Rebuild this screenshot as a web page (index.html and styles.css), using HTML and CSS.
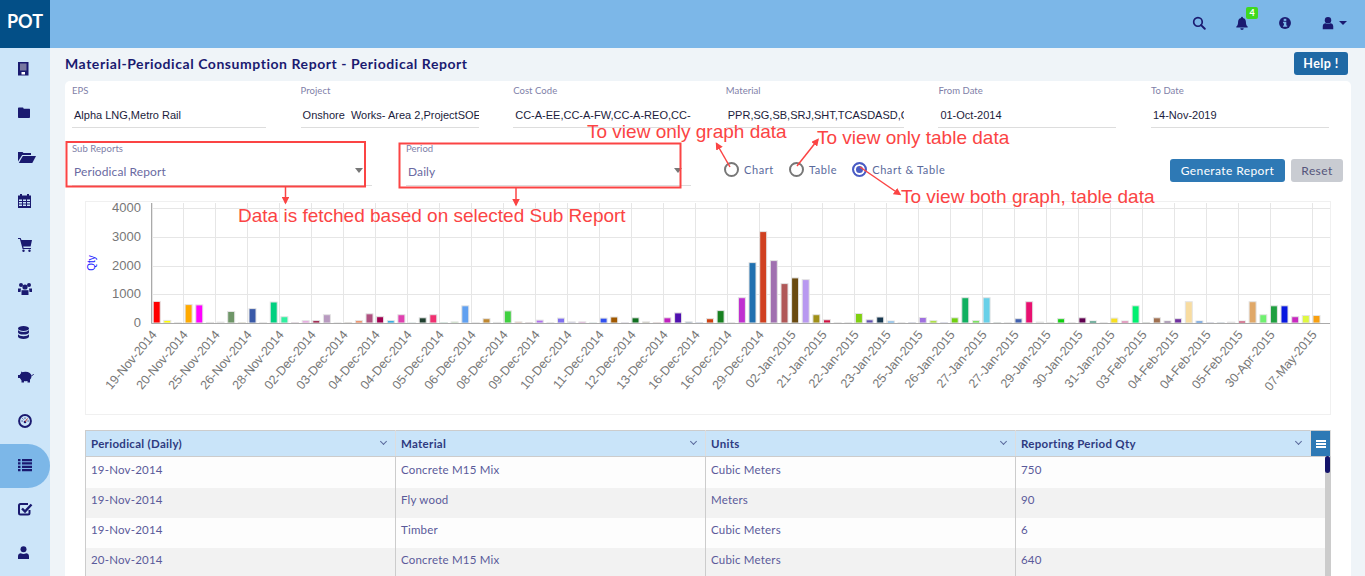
FILE: index.html
```html
<!DOCTYPE html>
<html lang="en">
<head>
    <meta charset="UTF-8">
    <meta name="viewport" content="width=device-width, initial-scale=1.0">
    <title>Material-Periodical Consumption Report</title>
    <link rel="stylesheet" href="styles.css">
</head>
<body>
    <header class="topbar">
        <div class="logo">POT</div>
        <div class="top-icons">
            <svg class="top-icon icon-search" viewBox="0 0 16 16"><circle cx="6.8" cy="6.8" r="4.9" fill="none" stroke="currentColor" stroke-width="1.9"/><path d="M10.4 10.4L14.6 14.6" stroke="currentColor" stroke-width="2.2" stroke-linecap="round"/></svg>
            <div class="bell">
                <svg class="top-icon" viewBox="0 0 16 16"><path d="M8 1a1.1 1.1 0 0 1 1.1 1.2C11.6 2.700 12.500 4.600 12.500 7c0 2.800.8 3.900 2 5v1H1.500v-1c1.200-1.100 2-2.200 2-5 0-2.400.9-4.300 3.400-4.800A1.100 1.100 0 0 1 8 1zM6 14h4a2 2 0 0 1-4 0z" fill="currentColor"/></svg>
                <span class="badge">4</span>
            </div>
            <svg class="top-icon icon-info" viewBox="0 0 16 16"><circle cx="8" cy="8" r="6.800" fill="currentColor"/><rect x="6.500" y="3.200" width="3" height="2.400" fill="#7cb7e8"/><path d="M5.800 6.700h3.700v4.200h1v1.500H5.800v-1.500h1V8.200h-1z" fill="#7cb7e8"/></svg>
            <div class="user-menu">
                <svg class="top-icon" viewBox="0 0 16 16"><circle cx="8" cy="4.800" r="3.700" fill="currentColor"/><path d="M2 15v-3c0-2.200 1.500-3.600 3.300-3.600 1.600 1 3.800 1 5.400 0 1.800 0 3.300 1.400 3.300 3.600v3z" fill="currentColor"/></svg>
                <span class="user-caret"></span>
            </div>
        </div>
    </header>

    <div class="layout">
        <nav class="sidebar">
            <a class="nav-item"><svg class="nav-icon" viewBox="0 0 18 16"><rect x="0" y="1" width="10.500" height="13.500" fill="currentColor"/><rect x="2" y="2.500" width="6.500" height="7" fill="#77779f"/><rect x="3.500" y="11" width="3.500" height="2.500" fill="#fff"/></svg></a>
            <a class="nav-item"><svg class="nav-icon" viewBox="0 0 18 16"><path d="M0 3.500C0 2.700.5 2.500 1 2.500h3.500c.6 0 1 .5 1.200 1.200h5.500c.6 0 .8.400.8 1V12c0 .6-.3 1-.8 1H1c-.6 0-1-.4-1-1z" fill="currentColor"/></svg></a>
            <a class="nav-item"><svg class="nav-icon" viewBox="0 0 18 16"><path d="M0 3h4.500l1 1H13v2H4.200L0 12.500z" fill="currentColor"/><path d="M4.800 7H18l-3.700 7H.8z" fill="currentColor"/></svg></a>
            <a class="nav-item"><svg class="nav-icon" viewBox="0 0 18 16"><path d="M0 2.500h2V1h2v1.500h5V1h2v1.500h2V15H0z" fill="currentColor"/><path d="M1 6.500h3v1.500H1zm4 0h3v1.500H5zm4 0h3v1.500H9zM1 9h3v1.500H1zm4 0h3v1.500H5zm4 0h3v1.500H9zM1 11.500h3V13H1zm4 0h3V13H5zm4 0h3V13H9z" fill="#cce5f9"/></svg></a>
            <a class="nav-item"><svg class="nav-icon" viewBox="0 0 18 16"><path d="M0 1h2.600l.9 2H14l-1.400 6.500H5.200l.4 1.500H13v1H4.600L1.900 2H0z" fill="currentColor"/><circle cx="5.500" cy="13.800" r="1.200" fill="currentColor"/><circle cx="11.500" cy="13.800" r="1.200" fill="currentColor"/></svg></a>
            <a class="nav-item"><svg class="nav-icon" viewBox="0 0 18 16"><circle cx="3" cy="4" r="2" fill="currentColor"/><circle cx="11" cy="4" r="2" fill="currentColor"/><circle cx="7" cy="6" r="2.600" fill="currentColor"/><path d="M0 7.500h3L2.500 11H0zM11 7.500h3V11h-2.500z" fill="currentColor"/><path d="M3.500 9.200h7V14h-7z" fill="currentColor"/></svg></a>
            <a class="nav-item"><svg class="nav-icon" viewBox="0 0 18 16"><ellipse cx="5.500" cy="3.500" rx="5.500" ry="2.500" fill="currentColor"/><path d="M0 5v2.200c0 1.300 2.500 2.400 5.500 2.400S11 8.500 11 7.200V5c-.8 1.300-3 2-5.500 2S.8 6.300 0 5zM0 9.300v2.200C0 12.900 2.500 14 5.500 14S11 12.900 11 11.500V9.300c-.8 1.300-3 2-5.500 2S.8 10.600 0 9.300z" fill="currentColor"/></svg></a>
            <a class="nav-item"><svg class="nav-icon" viewBox="0 0 18 16"><ellipse cx="7.500" cy="7.500" rx="6" ry="4.800" fill="currentColor"/><path d="M0 6h2.500v3H0zM3.500 10h2.500v3.500H3.500zM9.500 10H12v3.500H9.500zM3 2.500l3 1.500-2.500 2z" fill="currentColor"/><path d="M13.500 6.500c1 0 1.800-.5 2-1.500" fill="none" stroke="currentColor"/></svg></a>
            <a class="nav-item"><svg class="nav-icon" viewBox="0 0 18 16"><circle cx="7" cy="8" r="5.900" fill="#cce5f9" stroke="currentColor" stroke-width="2"/><circle cx="7" cy="9" r="1.300" fill="currentColor"/><path d="M7 9l2.500-3.500" stroke="#c0392b" stroke-width="1"/><path d="M3.500 8h1.200M9.500 8h1.200M7 4.500v1.200M4.500 5.500l.8.800" stroke="currentColor"/></svg></a>
            <a class="nav-item active"><svg class="nav-icon" viewBox="0 0 18 16"><path d="M0 2h2.500v2.300H0zM4 2h10v2.300H4zM0 5.300h2.500v2.300H0zM4 5.300h10v2.300H4zM0 8.700h2.500V11H0zM4 8.700h10V11H4zM0 12h2.500v2.300H0zM4 12h10v2.300H4z" fill="currentColor"/></svg></a>
            <a class="nav-item"><svg class="nav-icon" viewBox="0 0 18 16"><path d="M11.500 9v3c0 1-.5 1.500-1.500 1.500H2.500c-1 0-1.500-.5-1.500-1.500V4.500C1 3.500 1.500 3 2.500 3h7.500" fill="none" stroke="currentColor" stroke-width="2"/><path d="M4 7.500l3 3 6.500-7" fill="none" stroke="currentColor" stroke-width="2.400"/></svg></a>
            <a class="nav-item"><svg class="nav-icon" viewBox="0 0 18 16"><circle cx="5.500" cy="4.300" r="3" fill="currentColor"/><path d="M0 14v-2.500c0-2 1.300-3.200 2.800-3.200 1.700 1 3.700 1 5.400 0 1.500 0 2.800 1.200 2.800 3.200V14z" fill="currentColor"/></svg></a>
        </nav>

        <main class="content">
            <div class="page-head">
                <h1 class="page-title">Material-Periodical Consumption Report - Periodical Report</h1>
                <button class="btn btn-help">Help !</button>
            </div>

            <section class="card">
                <div class="filter-row">
                    <div class="field">
                        <div class="field-label">EPS</div>
                        <div class="field-value">Alpha LNG,Metro Rail</div>
                    </div>
                    <div class="field">
                        <div class="field-label">Project</div>
                        <div class="field-value">Onshore&nbsp; Works- Area 2,ProjectSOE</div>
                    </div>
                    <div class="field">
                        <div class="field-label">Cost Code</div>
                        <div class="field-value">CC-A-EE,CC-A-FW,CC-A-REO,CC-</div>
                    </div>
                    <div class="field">
                        <div class="field-label">Material</div>
                        <div class="field-value">PPR,SG,SB,SRJ,SHT,TCASDASD,CEM</div>
                    </div>
                    <div class="field">
                        <div class="field-label">From Date</div>
                        <div class="field-value">01-Oct-2014</div>
                    </div>
                    <div class="field">
                        <div class="field-label">To Date</div>
                        <div class="field-value">14-Nov-2019</div>
                    </div>
                </div>

                <div class="option-row">
                    <div class="field select-field select-sub">
                        <div class="field-label">Sub Reports</div>
                        <div class="select-value">Periodical Report</div>
                        <span class="select-caret"></span>
                    </div>
                    <div class="field select-field select-period">
                        <div class="field-label">Period</div>
                        <div class="select-value">Daily</div>
                        <span class="select-caret"></span>
                    </div>
                    <div class="radio-group">
                        <label class="radio"><span class="radio-mark"></span>Chart</label>
                        <label class="radio"><span class="radio-mark"></span>Table</label>
                        <label class="radio checked"><span class="radio-mark"></span>Chart &amp; Table</label>
                    </div>
                    <div class="actions">
                        <button class="btn btn-generate">Generate Report</button>
                        <button class="btn btn-reset">Reset</button>
                    </div>
                </div>

                <div class="chart-box">
                    <svg id="chart" class="chart" viewBox="85 201 1246 214"></svg>
                </div>

                <div class="table-wrap">
                    <table class="report-table">
                        <thead>
                            <tr>
                                <th class="col-a">Periodical (Daily)<span class="sort"></span></th>
                                <th class="col-a">Material<span class="sort"></span></th>
                                <th class="col-a">Units<span class="sort"></span></th>
                                <th class="col-b">Reporting Period Qty<span class="sort"></span></th>
                                <th class="col-menu"><span class="menu-bars"></span></th>
                            </tr>
                        </thead>
                        <tbody>
                            <tr class="first"><td>19-Nov-2014</td><td>Concrete M15 Mix</td><td>Cubic Meters</td><td colspan="2">750</td></tr>
                            <tr><td>19-Nov-2014</td><td>Fly wood</td><td>Meters</td><td colspan="2">90</td></tr>
                            <tr><td>19-Nov-2014</td><td>Timber</td><td>Cubic Meters</td><td colspan="2">6</td></tr>
                            <tr><td>20-Nov-2014</td><td>Concrete M15 Mix</td><td>Cubic Meters</td><td colspan="2">640</td></tr>
                        </tbody>
                    </table>
                    <div class="scroll-track"><div class="scroll-thumb"></div></div>
                </div>
            </section>
        </main>
    </div>

    <!-- red help notes drawn over the page -->
    <svg class="notes" viewBox="0 0 1365 576">
        <defs>
            <marker id="head" markerWidth="5" markerHeight="5" refX="4" refY="2.500" orient="auto"><path d="M0 0L5 2.500L0 5z" fill="#fb4444"/></marker>
        </defs>
        <rect class="note-box" x="66.500" y="142" width="298.500" height="44.500"/>
        <rect class="note-box" x="399.500" y="143.500" width="281" height="44"/>
        <path class="note-arrow" d="M285.500 187V203"/>
        <path class="note-arrow" d="M516 187V205"/>
        <path class="note-arrow" d="M730 167L716.500 143.500"/>
        <path class="note-arrow" d="M797 166L818 139.500"/>
        <path class="note-arrow" d="M860 167L900 194.500"/>
        <text class="note-text" x="587" y="138">To view only graph data</text>
        <text class="note-text" x="817" y="144">To view only table data</text>
        <text class="note-text" x="901" y="203">To view both graph, table data</text>
        <text class="note-text" x="238" y="222">Data is fetched based on selected Sub Report</text>
    </svg>

    <script src="chart.js"></script>
</body>
</html>
```

FILE: styles.css
```css
*{
    margin: 0;
    padding: 0;
    box-sizing: border-box;
}
html,body{
    height: 100%;
    overflow: hidden;
}
body{
    font-family: Lato, "Liberation Sans", sans-serif;
    background: #eff4f8;
    color: #1a1a70;
}

/* top bar */
.topbar{
    display: flex;
    height: 48px;
    background: #7cb7e8;
}
.logo{
    width: 50px;
    background: #034f87;
    color: #fff;
    font-size: 18px;
    font-weight: 700;
    line-height: 43px;
    text-align: center;
}
.top-icons{
    flex: 1;
    display: flex;
    justify-content: flex-end;
    align-items: center;
    gap: 29px;
    padding: 0 18px 2px 0;
    color: #1a1a70;
}
.top-icon{
    display: block;
    width: 14px;
    height: 14px;
}
.bell{
    position: relative;
}
.badge{
    position: absolute;
    top: -9px;
    left: 11px;
    width: 12px;
    height: 12px;
    border-radius: 2px;
    background: #3fd91f;
    color: #fff;
    font-size: 9px;
    font-weight: 700;
    line-height: 12px;
    text-align: center;
}
.user-menu{
    display: flex;
    align-items: center;
    gap: 4px;
}
.user-caret{
    border-left: 4px solid transparent;
    border-right: 4px solid transparent;
    border-top: 4px solid #1a1a70;
}

/* layout */
.layout{
    display: flex;
    height: 528px;
}
.sidebar{
    width: 50px;
    flex: none;
    background: #cce5f9;
}
.nav-item{
    display: flex;
    align-items: center;
    height: 44px;
    padding: 0 0 3px 18px;
    color: #1a1a70;
}
.nav-item.active{
    background: #7cb7e8;
    border-radius: 0 22px 22px 0;
}
.nav-icon{
    display: block;
    width: 18px;
    height: 16px;
}
.content{
    flex: 1;
    padding: 0 14px 0 15px;
}
.page-head{
    display: flex;
    justify-content: space-between;
    align-items: center;
    height: 33px;
    padding: 0 3px 2px 0;
}
.page-title{
    font-size: 14px;
    font-weight: 700;
    letter-spacing: .55px;
    color: #1a1a70;
}
.btn{
    border: 0;
    border-radius: 3px;
    font-family: Lato, "Liberation Sans", sans-serif;
    font-size: 12px;
    letter-spacing: .4px;
    color: #fff;
}
.btn-help{
    width: 54px;
    height: 23px;
    background: #1f69a5;
    font-size: 12.500px;
    font-weight: 700;
}

/* card */
.card{
    height: 520px;
    padding: 4px 8px 0 7px;
    background: #fff;
    border-radius: 5px 5px 0 0;
}
.filter-row{
    display: grid;
    grid-template-columns: 194px repeat(5, 178px);
    column-gap: 34.6px;
}
.field{
    height: 43px;
    border-bottom: 1px solid #ddd;
}
.field-label{
    font-size: 9.500px;
    line-height: 12px;
    letter-spacing: .05px;
    color: #7f7fa8;
}
.field-value{
    margin-top: 11px;
    padding-left: 2px;
    font-family: "Liberation Sans", sans-serif;
    font-size: 11px;
    line-height: 14px;
    color: #1c1c3c;
    white-space: nowrap;
    overflow: hidden;
}
.option-row{
    display: flex;
    margin-top: 14px;
    height: 44px;
}
.select-field{
    position: relative;
    height: 44px;
    padding-top: 1px;
}
.select-sub{
    width: 300px;
}
.select-period{
    width: 285px;
    margin-left: 34px;
}
.select-value{
    margin-top: 9px;
    padding-left: 2px;
    font-size: 12px;
    line-height: 16px;
    letter-spacing: .1px;
    color: #6a6aa2;
}
.select-caret{
    position: absolute;
    right: 9px;
    top: 26px;
    border-left: 4px solid transparent;
    border-right: 4px solid transparent;
    border-top: 5px solid #777;
}
.radio-group{
    display: flex;
    gap: 15px;
    margin-left: 33px;
    height: 44px;
    align-items: center;
    padding-top: 10px;
}
.radio{
    display: flex;
    align-items: center;
    gap: 5px;
    font-size: 11px;
    letter-spacing: .6px;
    color: #5a6a9c;
}
.radio-mark{
    width: 15px;
    height: 15px;
    border: 2px solid #777;
    border-radius: 50%;
}
.radio.checked .radio-mark{
    border-color: #4a5cc4;
    background: #4a5cc4;
    box-shadow: inset 0 0 0 2px #fff;
}
.actions{
    display: flex;
    gap: 6px;
    margin-left: auto;
    padding-top: 17px;
}
.btn-generate{
    width: 115px;
    height: 23px;
    background: #2e79b5;
}
.btn-reset{
    width: 52px;
    height: 23px;
    background: #c9ccd2;
    color: #55557a;
}

/* chart */
.chart-box{
    width: 1246px;
    height: 214px;
    margin: 15px 0 0 13px;
    border: 1px solid #f0f0f0;
}
.chart{
    display: block;
    width: 1246px;
    height: 214px;
    margin: -1px;
}
.grid-line{
    stroke: #e6e6e6;
    stroke-width: 1;
}
.axis-line{
    stroke: #aaa;
    stroke-width: 1;
}
.tick-y{
    font: 13px "Liberation Sans", sans-serif;
    fill: #777;
    text-anchor: end;
}
.tick-x{
    font: 12.500px "Liberation Sans", sans-serif;
    fill: #777;
    text-anchor: end;
}
.axis-title{
    font: 10px "Liberation Sans", sans-serif;
    fill: #2222ff;
    text-anchor: middle;
}
.bar{
    stroke: #e4e4e4;
    stroke-width: 1;
}

/* table */
.table-wrap{
    position: relative;
    width: 1245px;
    margin: 15px 0 0 13px;
}
.report-table{
    width: 1245px;
    table-layout: fixed;
    border-collapse: collapse;
    border-left: 1px solid #ccc;
    border-right: 1px solid #ccc;
}
.report-table th{
    height: 26px;
    padding-left: 5px;
    position: relative;
    background: #c9e4f9;
    border-top: 1px solid #ccc;
    border-bottom: 1px solid #ccc;
    border-right: 1px solid #ddd;
    font-size: 11.500px;
    font-weight: 700;
    letter-spacing: .3px;
    text-align: left;
    color: #2e3a80;
}
.col-a{
    width: 310px;
}
.col-b{
    width: 295px;
}
.col-menu{
    width: 20px;
    border-right: 0;
}
.report-table th.col-menu{
    padding: 0;
    background: #2e79b5;
}
.menu-bars{
    display: block;
    width: 10px;
    height: 8px;
    margin: 0 auto;
    border-top: 2px solid #fff;
    border-bottom: 2px solid #fff;
    position: relative;
}
.menu-bars::after{
    content: "";
    position: absolute;
    left: 0;
    right: 0;
    top: 1px;
    height: 2px;
    background: #fff;
}
.sort{
    position: absolute;
    right: 9px;
    top: 8px;
    width: 5px;
    height: 5px;
    border-right: 1px solid #5a6a9c;
    border-bottom: 1px solid #5a6a9c;
    transform: rotate(45deg);
}
.report-table td{
    height: 30px;
    padding: 5px 0 0 5px;
    vertical-align: top;
    font-size: 11.500px;
    line-height: 14px;
    letter-spacing: .2px;
    color: #5a5a9a;
    border-right: 1px solid #ccc;
}
.report-table tr.first td{
    height: 31px;
    padding-top: 6px;
}
.report-table tbody tr:nth-child(odd){
    background: #fdfdfd;
}
.report-table tbody tr:nth-child(even){
    background: #f2f2f2;
}
.scroll-track{
    position: absolute;
    right: 0;
    top: 26px;
    bottom: 0;
    width: 5px;
    background: #ccc;
}
.scroll-thumb{
    height: 17px;
    border-radius: 3px;
    background: #14146a;
}

/* red notes */
.notes{
    position: absolute;
    left: 0;
    top: 0;
    width: 1365px;
    height: 576px;
    pointer-events: none;
}
.note-box{
    fill: none;
    stroke: #fb4444;
    stroke-width: 2;
}
.note-arrow{
    fill: none;
    stroke: #fb4444;
    stroke-width: 1.500;
    marker-end: url(#head);
}
.note-text{
    font: 19px "Liberation Sans", sans-serif;
    fill: #fb4444;
}
```

FILE: chart.js
```js
var oChart = document.getElementById('chart');
var aDate = ['19-Nov-2014','20-Nov-2014','25-Nov-2014','26-Nov-2014','28-Nov-2014','02-Dec-2014','03-Dec-2014','04-Dec-2014','04-Dec-2014','05-Dec-2014','06-Dec-2014','08-Dec-2014','09-Dec-2014','10-Dec-2014','11-Dec-2014','12-Dec-2014','13-Dec-2014','16-Dec-2014','16-Dec-2014','29-Dec-2014','02-Jan-2015','21-Jan-2015','22-Jan-2015','23-Jan-2015','25-Jan-2015','26-Jan-2015','27-Jan-2015','27-Jan-2015','29-Jan-2015','30-Jan-2015','31-Jan-2015','03-Feb-2015','04-Feb-2015','04-Feb-2015','05-Feb-2015','30-Apr-2015','07-May-2015'];
// [qty, colour] per bar, left to right
var aBar = [
    [750,'#f00'],[90,'#ff0'],[6,'#ccc'],[640,'#fa0'],[630,'#f0f'],[20,'#800'],[30,'#00c'],[400,'#6f9668'],[15,'#ed0'],[500,'#3a5aa8'],
    [6,'#ccc'],[730,'#00d080'],[220,'#30f0a0'],[15,'#e000a0'],[80,'#e8a0e0'],[80,'#900030'],[290,'#b89ac0'],[5,'#ccc'],[10,'#705020'],[80,'#f08050'],
    [320,'#b05080'],[220,'#a00050'],[80,'#10a0e0'],[290,'#e040b0'],[5,'#20c0a0'],[180,'#204030'],[290,'#f03070'],[10,'#00d070'],[40,'#90e080'],[600,'#60a0f0'],
    [8,'#ccc'],[150,'#c08830'],[20,'#008060'],[420,'#40d040'],[40,'#f09060'],[10,'#802040'],[100,'#b070f0'],[8,'#ccc'],[170,'#8070f0'],[40,'#a0a0e0'],
    [40,'#e050d0'],[5,'#40e0c0'],[170,'#3050f0'],[210,'#a05800'],[10,'#c8a0f0'],[180,'#107020'],[40,'#908860'],[15,'#f02020'],[180,'#c020c0'],[350,'#5010b0'],
    [40,'#205080'],[10,'#1050e0'],[150,'#d04010'],[430,'#188020'],[6,'#ccc'],[880,'#c030d0'],[2100,'#2070b0'],[3180,'#d04020'],[2170,'#a070b0'],[1370,'#b05858'],
    [1570,'#6a4a10'],[1510,'#b898f0'],[290,'#a09018'],[110,'#d01040'],[6,'#ccc'],[6,'#ccc'],[330,'#80d010'],[110,'#6050b0'],[210,'#183850'],[70,'#60b0f0'],
    [6,'#ccc'],[10,'#1030b0'],[190,'#a070e0'],[80,'#a0e020'],[10,'#4050f0'],[180,'#70d010'],[880,'#10b060'],[80,'#60e040'],[880,'#68d0e8'],[10,'#106040'],
    [6,'#ccc'],[150,'#4060b0'],[740,'#e81070'],[30,'#60d0a0'],[6,'#ccc'],[150,'#10d010'],[6,'#ccc'],[180,'#600050'],[70,'#108060'],[6,'#ccc'],
    [170,'#f8e020'],[70,'#e060a0'],[600,'#00f070'],[10,'#205020'],[180,'#a07050'],[70,'#806090'],[150,'#7030a0'],[740,'#f8dca0'],[70,'#3080e0'],[10,'#3040d0'],
    [10,'#3080c0'],[30,'#a02070'],[70,'#c82050'],[740,'#e0a868'],[290,'#70f070'],[600,'#20a040'],[600,'#0818e0'],[220,'#c828c0'],[260,'#e0f840'],[260,'#f8a010']
];
var iBase = 323;
var iLeft = 151.5;
var sHtml = '';

for(var i=0;i<=4;i++){
    var y = Math.round(iBase-i*28.75)+0.5;
    sHtml += '<line class="grid-line" x1="'+iLeft+'" x2="1330" y1="'+y+'" y2="'+y+'"/>';
    sHtml += '<text class="tick-y" x="141" y="'+(y+3)+'">'+(i*1000)+'</text>';
}
for(var j=0;j<aDate.length;j++){
    // the last tick stands a little further off, as the bars run on past it
    var x = j==aDate.length-1 ? 1312.5 : Math.round(iLeft+j*31.95)+0.5;
    sHtml += '<line class="grid-line" x1="'+x+'" x2="'+x+'" y1="203" y2="'+iBase+'"/>';
    sHtml += '<text class="tick-x" transform="translate('+(x+5)+' 335) rotate(-50)">'+aDate[j]+'</text>';
}
for(var k=0;k<aBar.length;k++){
    var h = aBar[k][0]*0.02875;
    var bx = 153.2+k*10.64;
    sHtml += '<rect class="bar" x="'+bx.toFixed(1)+'" y="'+(iBase-h).toFixed(1)+'" width="7" height="'+h.toFixed(1)+'" fill="'+aBar[k][1]+'"/>';
}
sHtml += '<line class="axis-line" x1="'+iLeft+'" x2="'+iLeft+'" y1="203" y2="'+(iBase+0.5)+'"/>';
sHtml += '<line class="axis-line" x1="'+iLeft+'" x2="1330" y1="'+(iBase+0.5)+'" y2="'+(iBase+0.5)+'"/>';
sHtml += '<text class="axis-title" transform="translate(95 263) rotate(-90)">Qty</text>';
oChart.innerHTML = sHtml;
```
